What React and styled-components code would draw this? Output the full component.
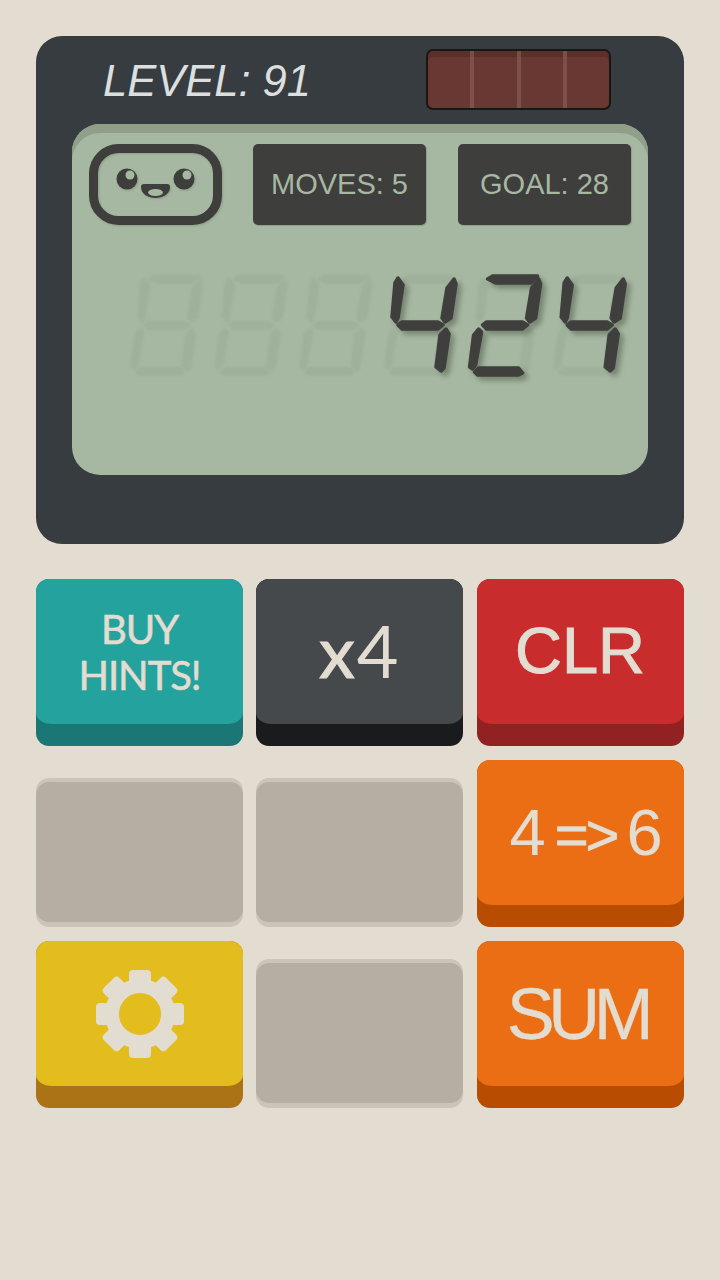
import React from "react";
import styled, { createGlobalStyle } from "styled-components";

const GlobalStyle = createGlobalStyle`
  html, body {
    margin: 0;
    padding: 0;
    background: #e3dcd0;
  }
  body {
    font-family: "Liberation Sans", Arial, sans-serif;
  }
`;

const Page = styled.div`
  width: 720px;
  height: 1280px;
  box-sizing: border-box;
  padding: 36px;
  overflow: hidden;
  background: #e3dcd0;
`;

const Calculator = styled.div`
  height: 508px;
  border-radius: 26px;
  background: #373c40;
  display: flex;
  flex-direction: column;
`;

const Header = styled.div`
  height: 88px;
  flex: none;
  box-sizing: border-box;
  padding: 13px 73px 0 67px;
  display: flex;
  justify-content: space-between;
  align-items: flex-start;
`;

const Level = styled.div`
  font-size: 43.5px;
  line-height: 64px;
  font-style: italic;
  color: #dcdfdf;
  white-space: nowrap;
`;

const Solar = styled.div`
  width: 185px;
  height: 61px;
  box-sizing: border-box;
  border: 2px solid #1b1614;
  border-radius: 7px;
  background: #6a3832;
  box-shadow: inset 0 6px 0 #5e2e2a;
  display: flex;
  overflow: hidden;
`;

const SolarCell = styled.div`
  flex: 1;
  border-right: ${(p) => (p.$last ? "none" : "4px solid rgba(140, 96, 88, 0.6)")};
`;

const Screen = styled.div`
  margin: 0 36px;
  height: 351px;
  flex: none;
  box-sizing: border-box;
  padding-top: 20px;
  border-radius: 28px;
  background: #a6b8a1;
  box-shadow: inset 0 9px 0 #8f9f8a;
  display: flex;
  flex-direction: column;
`;

const StatusRow = styled.div`
  display: flex;
  padding-left: 17px;
  height: 81px;
  flex: none;
`;

const FaceIcon = styled.svg`
  width: 133px;
  height: 81px;
  flex: none;
  margin-right: 31px;
  filter: drop-shadow(1px 1px 1px rgba(70, 80, 66, 0.25));
`;

const Counter = styled.div`
  width: 173px;
  height: 81px;
  flex: none;
  margin-right: 32px;
  border-radius: 5px;
  background: #3e3e3d;
  box-shadow: 1px 1px 1px rgba(70, 80, 66, 0.25);
  color: #a6b8a1;
  font-size: 29px;
  display: flex;
  align-items: center;
  justify-content: center;
  white-space: nowrap;
`;

const Display = styled.svg`
  display: block;
  width: 576px;
  height: 250px;
  flex: none;
`;

const GhostDigit = styled.g`
  fill: #9fb19a;
  stroke: #9fb19a;
  stroke-width: 2;
  stroke-linejoin: round;
  filter: blur(1.2px);
`;

const LitDigit = styled.g`
  fill: #3f3f3e;
  stroke: #3f3f3e;
  stroke-width: 3.5;
  stroke-linejoin: round;
  filter: drop-shadow(4px 4px 2.5px rgba(75, 85, 70, 0.5));
`;

const Keypad = styled.div`
  margin-top: 35px;
  display: grid;
  grid-template-columns: repeat(3, 207px);
  grid-auto-rows: 167px;
  column-gap: 13.25px;
  row-gap: 14px;
`;

const Key = styled.div`
  height: 167px;
  border-radius: 13px;
  background: ${(p) => p.$base};
`;

const KeyFace = styled.div`
  height: 145px;
  border-radius: 13px 13px 16px 16px / 13px 13px 11px 11px;
  background: ${(p) => p.$face};
  color: #e3dcd0;
  display: flex;
  align-items: center;
  justify-content: center;
  white-space: nowrap;
`;

const EmptyKey = styled.div`
  align-self: end;
  height: 149px;
  box-sizing: border-box;
  padding: 4px 0 5px;
  border-radius: 13px;
  background: #cbc4b8;
`;

const EmptyFace = styled.div`
  height: 100%;
  border-radius: 13px;
  background: #b6aea2;
`;

const HintLabel = styled.div`
  font-family: "Lato", sans-serif;
  font-size: 40px;
  line-height: 46px;
  letter-spacing: -1px;
  text-align: center;
  -webkit-text-stroke: 0.6px #e3dcd0;
`;

const MultLabel = styled.div`
  font-family: "Lato", sans-serif;
  font-size: 72px;
  line-height: 72px;
  letter-spacing: 2px;
  margin-top: -3px;
`;

const MultSign = styled.span`
  -webkit-text-stroke: 1px #e3dcd0;
`;

const ClearLabel = styled.div`
  font-size: 65px;
  margin-top: -2px;
  -webkit-text-stroke: 1px #e3dcd0;
`;

const ReplaceLabel = styled.div`
  font-size: 65px;
  padding-left: 12px;
`;

const ReplaceArrow = styled.span`
  font-size: 58px;
  letter-spacing: -3px;
  margin: 0 10px 0 9px;
  -webkit-text-stroke: 0.8px #e3dcd0;
`;

const SumLabel = styled.div`
  font-size: 72px;
  letter-spacing: -6.5px;
  padding-right: 6px;
  -webkit-text-stroke: 0.3px #e3dcd0;
`;

const GearIcon = styled.svg`
  width: 90px;
  height: 90px;
  fill: #e3dcd0;
  stroke: none;
`;

// segment outlines, in page pixels, for the fourth digit cell
const SEGMENTS = {
  a: "403,279 408,276 453,276 446,283 411,283",
  b: "454,279 456,284 451,318 445,322 442,318 447,288",
  c: "446,329 449,334 444,368 441,371 436,367 440,335",
  d: "390,372 394,368 434,368 438,373 434,375 393,375",
  e: "394,329 397,332 391,365 388,369 385,367 389,335",
  f: "398,278 403,285 398,318 396,322 392,317 395,283",
  g: "398,325 402,322 438,322 443,325 438,329 402,329",
};
const ALL_SEGMENTS = Object.keys(SEGMENTS);
const PITCH = 84.6;
const LIT = { 3: ["b", "c", "f", "g"], 4: ["a", "b", "d", "e", "g"], 5: ["b", "c", "f", "g"] };

function Segments({ cell, names }) {
  return (
    <g transform={`translate(${(cell - 3) * PITCH} 0)`}>
      {names.map((n) => (
        <polygon key={n} points={SEGMENTS[n]} />
      ))}
    </g>
  );
}

function Face() {
  return (
    <FaceIcon viewBox="89 144 133 81">
      <rect x="93.5" y="148.5" width="124" height="72" rx="25" fill="none" stroke="#3e3e3c" strokeWidth="9" />
      <circle cx="127" cy="179" r="10.5" fill="#3e3e3c" />
      <circle cx="130" cy="175" r="4.5" fill="#a6b8a1" />
      <circle cx="184" cy="179" r="10.5" fill="#3e3e3c" />
      <circle cx="187" cy="175" r="4.5" fill="#a6b8a1" />
      <path d="M141 187 Q141 184 144 184 H167 Q170 184 170 187 C170 194 163 198 155.500 198 C148 198 141 194 141 187 Z" fill="#3e3e3c" />
      <ellipse cx="155.500" cy="192.500" rx="7.500" ry="3.500" fill="#a6b8a1" />
    </FaceIcon>
  );
}

function Gear() {
  return (
    <GearIcon viewBox="-45 -45 90 90">
      <circle r="28" fill="none" stroke="#e3dcd0" strokeWidth="14" />
      {[0, 45, 90, 135, 180, 225, 270, 315].map((a) => (
        <rect key={a} x="-11" y="-44" width="22" height="18" rx="4" transform={`rotate(${a})`} />
      ))}
    </GearIcon>
  );
}

export default function App() {
  return (
    <Page>
      <GlobalStyle />
      <Calculator>
        <Header>
          <Level>LEVEL: 91</Level>
          <Solar>
            <SolarCell />
            <SolarCell />
            <SolarCell />
            <SolarCell $last />
          </Solar>
        </Header>
        <Screen>
          <StatusRow>
            <Face />
            <Counter>MOVES: 5</Counter>
            <Counter>GOAL: 28</Counter>
          </StatusRow>
          <Display viewBox="72 225 576 250">
            <GhostDigit>
              {[0, 1, 2, 3, 4, 5].map((c) => (
                <Segments key={c} cell={c} names={ALL_SEGMENTS} />
              ))}
            </GhostDigit>
            <LitDigit>
              {[3, 4, 5].map((c) => (
                <Segments key={c} cell={c} names={LIT[c]} />
              ))}
            </LitDigit>
          </Display>
        </Screen>
      </Calculator>
      <Keypad>
        <Key $base="#1a7776">
          <KeyFace $face="#24a29d">
            <HintLabel>
              BUY
              <br />
              HINTS!
            </HintLabel>
          </KeyFace>
        </Key>
        <Key $base="#1a1b1d">
          <KeyFace $face="#46494c">
            <MultLabel>
              <MultSign>x</MultSign>4
            </MultLabel>
          </KeyFace>
        </Key>
        <Key $base="#922222">
          <KeyFace $face="#c92c2c">
            <ClearLabel>CLR</ClearLabel>
          </KeyFace>
        </Key>
        <EmptyKey>
          <EmptyFace />
        </EmptyKey>
        <EmptyKey>
          <EmptyFace />
        </EmptyKey>
        <Key $base="#b84d02">
          <KeyFace $face="#ec6e14">
            <ReplaceLabel>
              4<ReplaceArrow>=&gt;</ReplaceArrow>6
            </ReplaceLabel>
          </KeyFace>
        </Key>
        <Key $base="#ab7315">
          <KeyFace $face="#e3bc1d">
            <Gear />
          </KeyFace>
        </Key>
        <EmptyKey>
          <EmptyFace />
        </EmptyKey>
        <Key $base="#b84d02">
          <KeyFace $face="#ec6e14">
            <SumLabel>SUM</SumLabel>
          </KeyFace>
        </Key>
      </Keypad>
    </Page>
  );
}
